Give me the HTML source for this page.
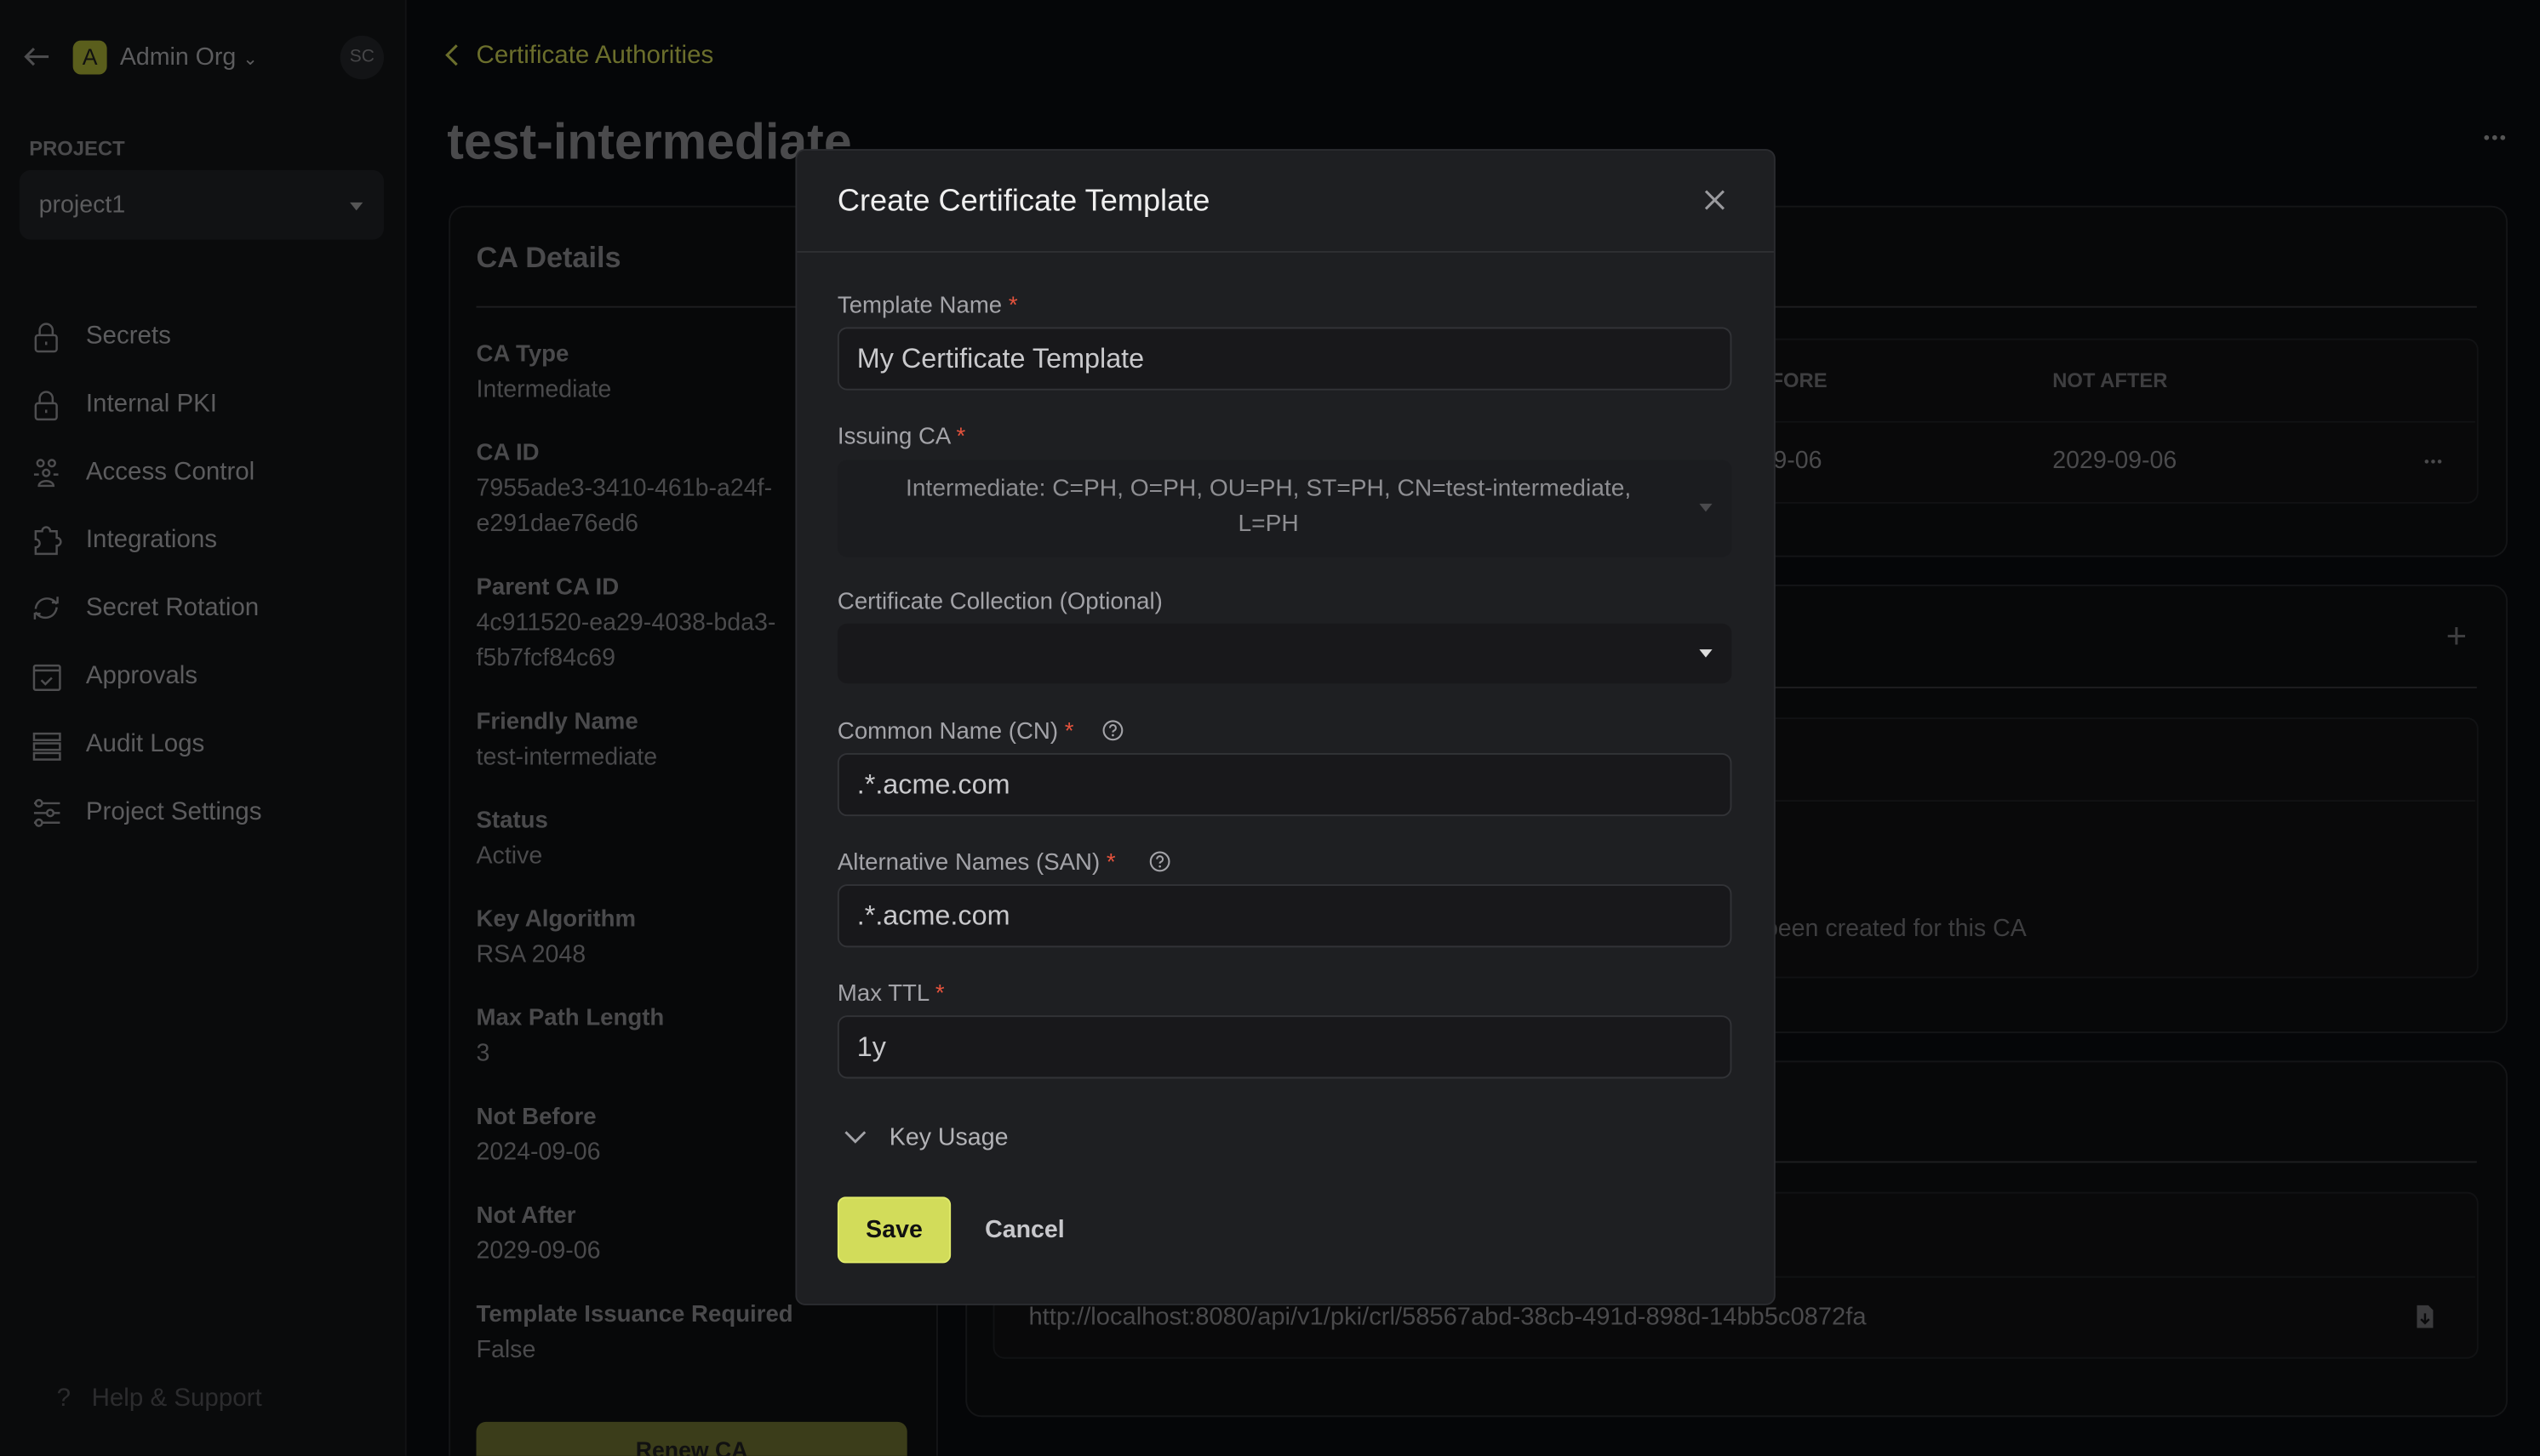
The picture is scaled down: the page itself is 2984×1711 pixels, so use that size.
<!DOCTYPE html>
<html><head><meta charset="utf-8">
<style>
html,body{margin:0;padding:0;width:2984px;height:1710px;overflow:hidden;background:#050608;}
#w{position:absolute;left:0;top:0;width:1568px;height:899px;transform:scale(1.9031);transform-origin:0 0;font-family:"Liberation Sans",Arial,sans-serif;background:#050608;overflow:hidden;}
.a{position:absolute;white-space:nowrap;}
.t{line-height:20px;height:20px;}
.nav{font-size:15.5px;color:#5c5c5e;}
.lbl{font-size:14.5px;font-weight:bold;color:#4a4a4c;}
.val{font-size:15px;color:#4a4a4c;}
.card{position:absolute;border:1px solid #141517;border-radius:10px;background:#070809;}
.ml{font-size:14.5px;color:#a3a3a8;}
.req{color:#e5533d;}
.inp{position:absolute;left:517px;width:550px;background:#18181b;border:1px solid #323337;border-radius:6px;}
.it{font-size:17px;color:#c9c9cc;}
svg{position:absolute;}
</style></head><body><div id="w">
<!-- sidebar -->
<div style="position:absolute;left:0;top:0;width:250px;height:899px;background:#0a0b0c;border-right:1px solid #121315;"></div>
<svg style="left:14px;top:28px" width="18" height="14" viewBox="0 0 18 14"><path d="M16 7H2M7 2L2 7l5 5" stroke="#4e4e50" stroke-width="1.6" fill="none"/></svg>
<div class="a" style="left:45px;top:25px;width:21px;height:21px;border-radius:5px;background:#5a5e1c;color:#111;font-size:14px;text-align:center;line-height:21px;">A</div>
<div class="a t" style="left:74px;top:26px;font-size:15px;color:#5c5c5e;">Admin Org <span style="font-size:11px">&#8964;</span></div>
<div class="a" style="left:210px;top:22px;width:27px;height:27px;border-radius:50%;background:#131416;color:#464648;font-size:11px;text-align:center;line-height:27px;">SC</div>
<div class="a t" style="left:18px;top:82px;font-size:12.5px;font-weight:bold;color:#4a4a4c;">PROJECT</div>
<div class="a" style="left:12px;top:105px;width:225px;height:43px;border-radius:7px;background:#111214;"></div>
<div class="a t" style="left:24px;top:117px;font-size:15px;color:#5c5c5e;">project1</div>
<div class="a" style="left:216px;top:125px;width:0;height:0;border-left:4px solid transparent;border-right:4px solid transparent;border-top:5px solid #555;"></div>

<svg style="left:19px;top:198px" width="20" height="320" viewBox="0 0 20 320" fill="none" stroke="#4e4e50" stroke-width="1.3">
<rect x="3" y="9" width="13" height="10" rx="1.5"/><path d="M5.5 9V6a4 4 0 0 1 8 0v3M9.5 13v2"/>
<g transform="translate(0,42)"><rect x="3" y="9" width="13" height="10" rx="1.5"/><path d="M5.5 9V6a4 4 0 0 1 8 0v3M9.5 13v2"/></g>
<g transform="translate(0,84)"><circle cx="6" cy="4" r="2"/><circle cx="13" cy="4" r="2"/><circle cx="9.5" cy="10" r="2"/><path d="M2 11h3M14 11h3M5 18a4.5 3 0 0 1 9 0z"/></g>
<g transform="translate(0,126)"><path d="M7 4a2.5 2.5 0 0 1 5 0h4v4a2.5 2.5 0 0 1 0 5v5H3v-4a2.5 2.5 0 0 0 0-5V4z"/></g>
<g transform="translate(0,168)"><path d="M3 10a7 7 0 0 1 13-3M16 9a7 7 0 0 1-13 3M13 6h3.5V2.5M6 13H2.5v3.5"/></g>
<g transform="translate(0,210)"><rect x="2" y="3" width="16" height="15" rx="1"/><path d="M2 6h16M6.5 12l2.5 2.5 4-4"/></g>
<g transform="translate(0,252)"><rect x="2" y="3" width="16" height="4"/><rect x="2" y="9" width="16" height="4"/><rect x="2" y="15" width="16" height="4"/></g>
<g transform="translate(0,294)"><path d="M2 4h16M2 10h16M2 16h16"/><circle cx="5" cy="4" r="2" fill="#0a0b0c"/><circle cx="12" cy="10" r="2" fill="#0a0b0c"/><circle cx="5" cy="16" r="2" fill="#0a0b0c"/></g>
</svg>
<div class="a t nav" style="left:53px;top:198px">Secrets</div>
<div class="a t nav" style="left:53px;top:240px">Internal PKI</div>
<div class="a t nav" style="left:53px;top:282px">Access Control</div>
<div class="a t nav" style="left:53px;top:324px">Integrations</div>
<div class="a t nav" style="left:53px;top:366px">Secret Rotation</div>
<div class="a t nav" style="left:53px;top:408px">Approvals</div>
<div class="a t nav" style="left:53px;top:450px">Audit Logs</div>
<div class="a t nav" style="left:53px;top:492px">Project Settings</div>
<div class="a t" style="left:35px;top:854px;font-size:15.5px;color:#2c2c2e;">?&nbsp;&nbsp;&nbsp;Help &amp; Support</div>

<!-- main -->
<svg style="left:274px;top:27px" width="10" height="14" viewBox="0 0 10 14"><path d="M8 1L2 7l6 6" stroke="#6b6e2c" stroke-width="1.6" fill="none"/></svg>
<div class="a t" style="left:294px;top:25px;font-size:15.5px;color:#6b6e2c;">Certificate Authorities</div>
<div class="a" style="left:276px;top:69px;font-size:31px;line-height:38px;font-weight:bold;color:#4a4a4c;">test-intermediate</div>
<svg style="left:1533px;top:83px" width="14" height="4" viewBox="0 0 14 4"><circle cx="2" cy="2" r="1.5" fill="#555"/><circle cx="7" cy="2" r="1.5" fill="#555"/><circle cx="12" cy="2" r="1.5" fill="#555"/></svg>

<div class="card" style="left:277px;top:127px;width:300px;height:800px;"></div>
<div class="a" style="left:294px;top:147px;font-size:18px;line-height:24px;font-weight:bold;color:#4a4a4c;">CA Details</div>
<div class="a" style="left:294px;top:189px;width:266px;height:1px;background:#1e1f21;"></div>
<div class="a lbl t" style="left:294px;top:209px">CA Type</div><div class="a val t" style="left:294px;top:231px">Intermediate</div>
<div class="a lbl t" style="left:294px;top:270px">CA ID</div><div class="a val t" style="left:294px;top:292px">7955ade3-3410-461b-a24f-</div><div class="a val t" style="left:294px;top:314px">e291dae76ed6</div>
<div class="a lbl t" style="left:294px;top:353px">Parent CA ID</div><div class="a val t" style="left:294px;top:375px">4c911520-ea29-4038-bda3-</div><div class="a val t" style="left:294px;top:397px">f5b7fcf84c69</div>
<div class="a lbl t" style="left:294px;top:436px">Friendly Name</div><div class="a val t" style="left:294px;top:458px">test-intermediate</div>
<div class="a lbl t" style="left:294px;top:497px">Status</div><div class="a val t" style="left:294px;top:519px">Active</div>
<div class="a lbl t" style="left:294px;top:558px">Key Algorithm</div><div class="a val t" style="left:294px;top:580px">RSA 2048</div>
<div class="a lbl t" style="left:294px;top:619px">Max Path Length</div><div class="a val t" style="left:294px;top:641px">3</div>
<div class="a lbl t" style="left:294px;top:680px">Not Before</div><div class="a val t" style="left:294px;top:702px">2024-09-06</div>
<div class="a lbl t" style="left:294px;top:741px">Not After</div><div class="a val t" style="left:294px;top:763px">2029-09-06</div>
<div class="a lbl t" style="left:294px;top:802px">Template Issuance Required</div><div class="a val t" style="left:294px;top:824px">False</div>
<div class="a" style="left:294px;top:878px;width:266px;height:40px;border-radius:6px;background:#3b3d1a;color:#111;font-size:14px;font-weight:bold;text-align:center;line-height:34px;">Renew CA</div>

<div class="card" style="left:596px;top:127px;width:950px;height:215px;"></div>
<div class="a" style="left:612px;top:189px;width:917px;height:1px;background:#1e1f21;"></div>
<div class="a" style="left:613px;top:209px;width:915px;height:100px;border:1px solid #111214;border-radius:7px;background:#09090a;"></div>
<div class="a" style="left:614px;top:260px;width:914px;height:1px;background:#111214;"></div>
<div class="a t" style="left:1046px;top:225px;font-size:12.5px;font-weight:bold;color:#3e3e40;">NOT BEFORE</div>
<div class="a t" style="left:1267px;top:225px;font-size:12.5px;font-weight:bold;color:#3e3e40;">NOT AFTER</div>
<div class="a t" style="left:1048px;top:275px;font-size:15px;color:#4a4a4c;">2024-09-06</div>
<div class="a t" style="left:1267px;top:275px;font-size:15px;color:#4a4a4c;">2029-09-06</div>
<svg style="left:1496px;top:283px" width="12" height="4" viewBox="0 0 12 4"><circle cx="2" cy="2" r="1.2" fill="#4a4a4c"/><circle cx="6" cy="2" r="1.2" fill="#4a4a4c"/><circle cx="10" cy="2" r="1.2" fill="#4a4a4c"/></svg>

<div class="card" style="left:596px;top:361px;width:950px;height:275px;"></div>
<div class="a" style="left:1510px;top:380px;font-size:22px;line-height:26px;color:#3e3e40;">+</div>
<div class="a" style="left:612px;top:424px;width:917px;height:1px;background:#1e1f21;"></div>
<div class="a" style="left:613px;top:443px;width:915px;height:159px;border:1px solid #111214;border-radius:7px;background:#09090a;"></div>
<div class="a" style="left:614px;top:494px;width:914px;height:1px;background:#111214;"></div>
<div class="a t" style="left:960px;top:564px;font-size:15px;color:#3e3e40;">No templates have been created for this CA</div>

<div class="card" style="left:596px;top:655px;width:950px;height:218px;"></div>
<div class="a" style="left:612px;top:717px;width:917px;height:1px;background:#1e1f21;"></div>
<div class="a" style="left:613px;top:736px;width:915px;height:101px;border:1px solid #111214;border-radius:7px;background:#09090a;"></div>
<div class="a" style="left:614px;top:788px;width:914px;height:1px;background:#111214;"></div>
<div class="a t" style="left:635px;top:804px;font-size:15.3px;color:#4a4a4c;">http://localhost:8080/api/v1/pki/crl/58567abd-38cb-491d-898d-14bb5c0872fa</div>
<svg style="left:1491px;top:805px" width="12" height="16" viewBox="0 0 12 16"><path d="M1 1h7l3 3v11H1z" fill="#3a3a3c"/><path d="M6 6v6M3.5 9.5L6 12l2.5-2.5" stroke="#0a0a0b" stroke-width="1.3" fill="none"/></svg>

<!-- modal -->
<div class="a" style="left:491px;top:92px;width:603px;height:712px;background:#1e1f22;border:1px solid #2b2c30;border-radius:6px;"></div>
<div class="a" style="left:517px;top:112px;font-size:19px;line-height:26px;color:#efefef;">Create Certificate Template</div>
<svg style="left:1052px;top:117px" width="13" height="13" viewBox="0 0 13 13"><path d="M1 1l11 11M12 1L1 12" stroke="#9a9a9e" stroke-width="1.6"/></svg>
<div class="a" style="left:492px;top:155px;width:603px;height:1px;background:#2e2f33;"></div>

<div class="a t ml" style="left:517px;top:179px">Template Name <span class="req">*</span></div>
<div class="inp" style="top:202px;height:37px"></div>
<div class="a t it" style="left:529px;top:212px">My Certificate Template</div>

<div class="a t ml" style="left:517px;top:260px">Issuing CA <span class="req">*</span></div>
<div class="a" style="left:517px;top:284px;width:552px;height:60px;background:#1b1c1f;border-radius:6px;"></div>
<div class="a" style="left:540px;top:291px;width:486px;text-align:center;font-size:14.8px;line-height:22px;color:#8e8e92;white-space:normal;">Intermediate: C=PH, O=PH, OU=PH, ST=PH, CN=test-intermediate, L=PH</div>
<div class="a" style="left:1049px;top:311px;border-left:4px solid transparent;border-right:4px solid transparent;border-top:5px solid #4a4a4d;"></div>

<div class="a t ml" style="left:517px;top:362px">Certificate Collection (Optional)</div>
<div class="a" style="left:517px;top:385px;width:552px;height:37px;background:#18181b;border-radius:6px;"></div>
<div class="a" style="left:1049px;top:401px;border-left:4px solid transparent;border-right:4px solid transparent;border-top:5px solid #ddd;"></div>

<div class="a t ml" style="left:517px;top:442px">Common Name (CN) <span class="req">*</span></div>
<svg style="left:680px;top:444px" width="14" height="14" viewBox="0 0 14 14"><circle cx="7" cy="7" r="5.7" stroke="#a3a3a8" stroke-width="1.1" fill="none"/><path d="M5.2 5.5a1.8 1.8 0 1 1 2.4 1.7c-.5.2-.6.5-.6 1" stroke="#a3a3a8" stroke-width="1.1" fill="none"/><circle cx="7" cy="10" r=".7" fill="#a3a3a8"/></svg>
<div class="inp" style="top:465px;height:37px"></div>
<div class="a t it" style="left:529px;top:475px">.*.acme.com</div>

<div class="a t ml" style="left:517px;top:523px">Alternative Names (SAN) <span class="req">*</span></div>
<svg style="left:709px;top:525px" width="14" height="14" viewBox="0 0 14 14"><circle cx="7" cy="7" r="5.7" stroke="#a3a3a8" stroke-width="1.1" fill="none"/><path d="M5.2 5.5a1.8 1.8 0 1 1 2.4 1.7c-.5.2-.6.5-.6 1" stroke="#a3a3a8" stroke-width="1.1" fill="none"/><circle cx="7" cy="10" r=".7" fill="#a3a3a8"/></svg>
<div class="inp" style="top:546px;height:37px"></div>
<div class="a t it" style="left:529px;top:556px">.*.acme.com</div>

<div class="a t ml" style="left:517px;top:604px">Max TTL <span class="req">*</span></div>
<div class="inp" style="top:627px;height:37px"></div>
<div class="a t it" style="left:529px;top:637px">1y</div>

<svg style="left:521px;top:697px" width="14" height="10" viewBox="0 0 14 10"><path d="M1 2l6 6 6-6" stroke="#a3a3a8" stroke-width="1.5" fill="none"/></svg>
<div class="a t" style="left:549px;top:693px;font-size:15px;color:#b3b3b7;">Key Usage</div>

<div class="a" style="left:517px;top:739px;width:68px;height:39px;border:1px solid #e0ea6a;border-radius:5px;background:#d2dc5a;color:#111;font-size:15px;font-weight:bold;text-align:center;line-height:39px;">Save</div>
<div class="a t" style="left:608px;top:750px;font-size:15px;font-weight:bold;color:#c8c8cc;">Cancel</div>
</div></body></html>
